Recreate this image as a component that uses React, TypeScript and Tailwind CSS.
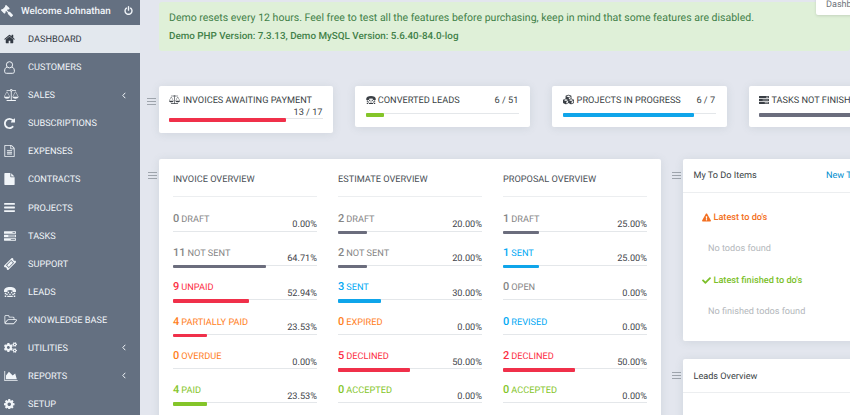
import React from "react";
import { FaCheck, FaCogs, FaCubes, FaExclamationTriangle, FaGavel } from "react-icons/fa";

const PATHS = {
  home: "M1472 992v480q0 26-19 45t-45 19h-384v-384h-256v384h-384q-26 0-45-19t-19-45v-480q0-1 .5-3t.5-3l575-474 575 474q1 2 1 6zm223-69l-62 74q-8 9-21 11h-3q-13 0-21-7l-692-577-692 577q-12 8-24 7-13-2-21-11l-62-74q-8-10-7-23.5t11-21.5l719-599q32-26 76-26t76 26l244 204v-195q0-14 9-23t23-9h192q14 0 23 9t9 23v408l219 182q10 8 11 21.5t-7 23.5z",
  repeat: "M1664 256v448q0 26-19 45t-45 19h-448q-42 0-59-40-17-39 14-69l138-138q-148-137-349-137-104 0-198.5 40.5t-163.5 109.5-109.5 163.5-40.5 198.5 40.5 198.5 109.5 163.5 163.5 109.5 198.5 40.5q119 0 225-52t179-147q7-10 23-12 15 0 25 9l137 138q9 8 9.5 20.5t-7.5 22.5q-109 132-264 204.5t-327 72.5q-156 0-298-61t-245-164-164-245-61-298 61-298 164-245 245-164 298-61q147 0 284.5 55.5t244.5 156.5l130-129q29-31 70-14 39 17 39 59z",
  tasks: "M1024 1408h640v-128h-640v128zm-384-512h1024v-128h-1024v128zm640-512h384v-128h-384v128zm512 832v256q0 26-19 45t-45 19h-1664q-26 0-45-19t-19-45v-256q0-26 19-45t45-19h1664q26 0 45 19t19 45zm0-512v256q0 26-19 45t-45 19h-1664q-26 0-45-19t-19-45v-256q0-26 19-45t45-19h1664q26 0 45 19t19 45zm0-512v256q0 26-19 45t-45 19h-1664q-26 0-45-19t-19-45v-256q0-26 19-45t45-19h1664q26 0 45 19t19 45z",
  power: "M1664 896q0 156-61 298t-164 245-245 164-298 61-298-61-245-164-164-245-61-298q0-182 80.5-343t226.5-270q43-32 95.5-25t83.5 50q32 42 24.5 94.5t-49.5 84.5q-98 74-151.5 181t-53.5 228q0 104 40.5 198.5t109.5 163.5 163.5 109.5 198.5 40.5 198.5-40.5 163.5-109.5 109.5-163.5 40.5-198.5q0-121-53.5-228t-151.5-181q-42-32-49.5-84.5t24.5-94.5q31-43 84-50t95 25q146 109 226.5 270t80.5 343zm-640-768v640q0 52-38 90t-90 38-90-38-38-90v-640q0-52 38-90t90-38 90 38 38 90z",
  folder: "M1845 931q0-35-53-35h-1088q-40 0-85.5 21.5t-71.5 52.5l-294 363q-18 24-18 40 0 35 53 35h1088q40 0 86-22t71-53l294-363q18-22 18-39zm-1141-163h768v-160q0-40-28-68t-68-28h-576q-40 0-68-28t-28-68v-64q0-40-28-68t-68-28h-320q-40 0-68 28t-28 68v853l256-315q44-53 116-87.5t140-34.5zm1269 163q0 62-46 120l-295 363q-43 53-116 87.5t-140 34.5h-1088q-92 0-158-66t-66-158v-960q0-92 66-158t158-66h320q92 0 158 66t66 158v32h544q92 0 158 66t66 158v160h192q54 0 99 24.5t67 70.5q15 32 15 68z",
  fileText: "M1596 380q28 28 48 76t20 88v1152q0 40-28 68t-68 28h-1344q-40 0-68-28t-28-68v-1600q0-40 28-68t68-28h896q40 0 88 20t76 48zm-444-244v376h376q-10-29-22-41l-313-313q-12-12-41-22zm384 1528v-1024h-416q-40 0-68-28t-28-68v-416h-768v1536h1280zm-1024-864q0-14 9-23t23-9h704q14 0 23 9t9 23v64q0 14-9 23t-23 9h-704q-14 0-23-9t-9-23v-64zm736 224q14 0 23 9t9 23v64q0 14-9 23t-23 9h-704q-14 0-23-9t-9-23v-64q0-14 9-23t23-9h704zm0 256q14 0 23 9t9 23v64q0 14-9 23t-23 9h-704q-14 0-23-9t-9-23v-64q0-14 9-23t23-9h704z",
  file: "M1152 512v-472q22 14 36 28l408 408q14 14 28 36h-472zm-128 32q0 40 28 68t68 28h544v1056q0 40-28 68t-68 28h-1344q-40 0-68-28t-28-68v-1600q0-40 28-68t68-28h800v544z",
  bars: "M1664 1344v128q0 26-19 45t-45 19h-1408q-26 0-45-19t-19-45v-128q0-26 19-45t45-19h1408q26 0 45 19t19 45zm0-512v128q0 26-19 45t-45 19h-1408q-26 0-45-19t-19-45v-128q0-26 19-45t45-19h1408q26 0 45 19t19 45zm0-512v128q0 26-19 45t-45 19h-1408q-26 0-45-19t-19-45v-128q0-26 19-45t45-19h1408q26 0 45 19t19 45z",
  area: "M2048 1536v128h-2048v-1536h128v1408h1920zm-384-1024l256 896h-1664v-576l448-576 576 576z",
  cog: "M1152 896q0-106-75-181t-181-75-181 75-75 181 75 181 181 75 181-75 75-181zm512-109v222q0 12-8 23t-20 13l-185 28q-19 54-39 91 35 50 107 138 10 12 10 25t-9 23q-27 37-99 108t-94 71q-12 0-26-9l-138-108q-44 23-91 38-16 136-29 186-7 28-36 28h-222q-14 0-24.5-8.5t-11.5-21.5l-28-184q-49-16-90-37l-141 107q-10 9-25 9-14 0-25-11-126-114-165-168-7-10-7-23 0-12 8-23 15-21 51-66.5t54-70.5q-27-50-41-99l-183-27q-13-2-21-12.5t-8-23.5v-222q0-12 8-23t19-13l186-28q14-46 39-92-40-57-107-138-10-12-10-24 0-10 9-23 26-36 98.5-107.5t94.5-71.5q13 0 26 10l138 107q44-23 91-38 16-136 29-186 7-28 36-28h222q14 0 24.5 8.5t11.5 21.5l28 184q49 16 90 37l142-107q9-9 24-9 13 0 25 10 129 119 165 170 7 8 7 22 0 12-8 23-15 21-51 66.5t-54 70.5q26 50 41 98l183 28q13 2 21 12.5t8 23.5z",
  scale: "M1728 448l-384 704h768zm-1280 0l-384 704h768zm821-192q-14 40-45.5 71.5t-71.5 45.5v1291h608q14 0 23 9t9 23v64q0 14-9 23t-23 9h-1344q-14 0-23-9t-9-23v-64q0-14 9-23t23-9h608v-1291q-40-14-71.5-45.5t-45.5-71.5h-491q-14 0-23-9t-9-23v-64q0-14 9-23t23-9h491q21-57 70-92.5t111-35.5 111 35.5 70 92.5h491q14 0 23 9t9 23v64q0 14-9 23t-23 9h-491zm-181 16q33 0 56.5-23.500t23.500-56.500-23.500-56.500-56.500-23.500-56.500 23.500-23.500 56.500 23.500 56.500 56.500 23.500zm1088 880q0 73-46.500 131t-117.500 91-144.500 49.500-139.500 16.500-139.500-16.500-144.500-49.500-117.500-91-46.500-131q0-11 35-81t92-174.500 107-195.500 102-184 56-100q18-33 56-33t56 33q4 7 56 100t102 184 107 195.500 92 174.500 35 81zm-1280 0q0 73-46.500 131t-117.500 91-144.500 49.500-139.500 16.500-139.500-16.500-144.500-49.500-117.500-91-46.500-131q0-11 35-81t92-174.500 107-195.500 102-184 56-100q18-33 56-33t56 33q4 7 56 100t102 184 107 195.500 92 174.500 35 81z",
};

function Glyph({ name, box = "0 0 1792 1792", className }: { name: keyof typeof PATHS; box?: string; className: string }) {
  return (
    <svg viewBox={box} fill="currentColor" className={className}>
      <path d={PATHS[name]} />
    </svg>
  );
}

function UserOutline() {
  return (
    <svg viewBox="0 0 11 13" fill="none" stroke="currentColor" strokeWidth="1" className="h-[13px] w-[11px]">
      <circle cx="5.5" cy="3.8" r="3.1" />
      <path d="M3 6C1.2 6.6.6 8.4.6 10.3.6 11.6 1.3 12.3 2.4 12.3H8.6C9.7 12.3 10.4 11.6 10.4 10.3 10.4 8.4 9.8 6.6 8 6" />
    </svg>
  );
}

function Tty({ className }: { className: string }) {
  return (
    <svg viewBox="0 0 24 20" fill="currentColor" className={className}>
      <path d="M0 7.500C0 2.800 5 0 12 0s12 2.800 12 7.500V9q0 1-1 1h-5q-1 0-1-1V6.800Q14.500 6 12 6T7 6.800V9q0 1-1 1H1Q0 10 0 9z" />
      <path d="M1.500 11.500h3v3h-3zM7.500 9.500h2.600v3H7.500zM13.900 9.500h2.600v3h-2.600zM19.500 11.500h3v3h-3zM4.600 13.500h2.800v2.600H4.600zM10.600 13.500h2.800v2.600h-2.800zM16.600 13.500h2.800v2.600h-2.800zM1.500 17h3v3h-3zM6.500 17.300h11V20h-11zM19.500 17h3v3h-3z" />
    </svg>
  );
}

function Ticket() {
  return (
    <svg viewBox="0 0 24 24" fill="currentColor" className="h-[12px] w-[12px]">
      <g transform="rotate(-45 12 12)">
        <path fillRule="evenodd" d="M0 6h24v3.800a2.400 2.400 0 0 0 0 4.600V18H0v-3.600a2.400 2.400 0 0 0 0-4.600zM4.600 8v8h14.800V8z" />
        <path d="M6.200 9.500h11.600v5H6.200z" />
      </g>
    </svg>
  );
}

function Arrow() {
  return (
    <svg viewBox="0 0 4 7" fill="none" stroke="currentColor" strokeWidth="1" className="ml-auto h-[7px] w-[4px]">
      <path d="M3.3.8L.8 3.5 3.3 6.2" />
    </svg>
  );
}

type MenuItem = { label: string; icon: React.ReactNode; active?: boolean; arrow?: boolean };

const menu: MenuItem[] = [
  { label: "DASHBOARD", icon: <Glyph name="home" box="50 128 1692 1536" className="h-[10px] w-[11px]" />, active: true },
  { label: "CUSTOMERS", icon: <UserOutline /> },
  { label: "SALES", icon: <Glyph name="scale" box="0 0 2176 1792" className="h-[12px] w-[14.500px]" />, arrow: true },
  { label: "SUBSCRIPTIONS", icon: <Glyph name="repeat" box="128 128 1536 1536" className="h-[11px] w-[11px]" /> },
  { label: "EXPENSES", icon: <Glyph name="fileText" box="128 0 1536 1792" className="h-[12px] w-[11px]" /> },
  { label: "CONTRACTS", icon: <Glyph name="file" box="128 0 1536 1792" className="h-[12px] w-[11px]" /> },
  { label: "PROJECTS", icon: <Glyph name="bars" box="128 256 1536 1280" className="h-[9px] w-[11px]" /> },
  { label: "TASKS", icon: <Glyph name="tasks" box="0 128 1792 1408" className="h-[10px] w-[12px]" /> },
  { label: "SUPPORT", icon: <Ticket /> },
  { label: "LEADS", icon: <Tty className="h-[10px] w-[12px]" /> },
  { label: "KNOWLEDGE BASE", icon: <Glyph name="folder" box="0 128 1984 1536" className="h-[10px] w-[13px]" /> },
  { label: "UTILITIES", icon: <FaCogs className="h-[13px] w-[13px]" />, arrow: true },
  { label: "REPORTS", icon: <Glyph name="area" box="0 128 2048 1536" className="h-[10px] w-[14px]" />, arrow: true },
  { label: "SETUP", icon: <Glyph name="cog" box="128 128 1536 1536" className="h-[10.500px] w-[10.500px]" /> },
];

function Sidebar() {
  return (
    <aside className="h-[415px] w-[140px] shrink-0 overflow-hidden bg-[#647081] text-[#f1f5f9]">
      <div className="flex h-[25px] items-center pb-[4px] pl-[1px] pr-[7px]">
        <FaGavel className="h-[12px] w-[12px] -scale-x-100" />
        <span className="ml-[8px] whitespace-nowrap pt-[4px] text-[9.800px] font-medium">Welcome Johnathan</span>
        <Glyph name="power" box="128 0 1536 1664" className="ml-auto h-[9px] w-[9px]" />
      </div>
      <nav>
        {menu.map((m) => (
          <div
            key={m.label}
            className={`flex h-[28.080px] items-center pl-[4px] pr-[14px] ${m.active ? "bg-[#e3e8ee] text-[#333a44]" : ""}`}
          >
            <span className="flex w-[24px] items-center">{m.icon}</span>
            <span className="whitespace-nowrap pt-[2px] text-[9.200px] leading-[14px]">{m.label}</span>
            {m.arrow && <Arrow />}
          </div>
        ))}
      </nav>
    </aside>
  );
}

function Handle({ className }: { className: string }) {
  return (
    <div className={`flex shrink-0 flex-col gap-[2px] ${className}`}>
      <i className="h-px w-[9px] bg-[#9fa5ad]" />
      <i className="h-px w-[9px] bg-[#9fa5ad]" />
      <i className="h-px w-[9px] bg-[#9fa5ad]" />
    </div>
  );
}

function Bar({ pct, color }: { pct: number; color: string }) {
  return (
    <div className="h-[4px]">
      <div className="h-px bg-[#e4e7ea]">
        <div className={`h-[3.500px] rounded-[1px] ${color}`} style={{ width: `${pct}%` }} />
      </div>
    </div>
  );
}

type StatProps = { icon: React.ReactNode; title: string; value: string; pct: number; color: string; wide?: boolean; wrap?: boolean };

function Stat({ icon, title, value, pct, color, wide, wrap }: StatProps) {
  return (
    <div className={`w-[174.500px] shrink-0 rounded-[2px] bg-white px-[10.500px] pt-[8px] shadow-[0_1px_8px_rgba(90,114,123,0.14)] ${wrap ? "h-[47px]" : "h-[41px]"}`}>
      <div className={`flex flex-wrap items-center text-[9.200px] leading-[13px] text-[#3a3f45] ${wrap ? "h-[24px]" : "h-[19px] content-start"}`}>
        <span className={`flex items-center pb-[2px] ${wide || wrap ? "w-[14px]" : "w-[12px]"}`}>{icon}</span>
        <span className="whitespace-nowrap">{title}</span>
        <span className={wrap ? "w-full text-right leading-[12px]" : "ml-auto pr-[1px]"}>{value}</span>
      </div>
      <Bar pct={pct} color={color} />
    </div>
  );
}

const GRAY = "text-[#858585]";
const BLUE = "text-[#03a9f4]";
const ORANGE = "text-[#ff7e1c]";
const RED = "text-[#fc2d42]";
const GREEN = "text-[#84c529]";
const DARK_BAR = "bg-[#6b6d7d]";
const BLUE_BAR = "bg-[#0fa5ea]";
const RED_BAR = "bg-[#f0304a]";
const GREEN_BAR = "bg-[#84c529]";

type Row = [number, string, string, number, string];

const overview: { title: string; rows: Row[] }[] = [
  {
    title: "INVOICE OVERVIEW",
    rows: [
      [0, "DRAFT", GRAY, 0, DARK_BAR],
      [11, "NOT SENT", GRAY, 64.71, DARK_BAR],
      [9, "UNPAID", RED, 52.94, RED_BAR],
      [4, "PARTIALLY PAID", ORANGE, 23.53, RED_BAR],
      [0, "OVERDUE", ORANGE, 0, RED_BAR],
      [4, "PAID", GREEN, 23.53, GREEN_BAR],
    ],
  },
  {
    title: "ESTIMATE OVERVIEW",
    rows: [
      [2, "DRAFT", GRAY, 20, DARK_BAR],
      [2, "NOT SENT", GRAY, 20, DARK_BAR],
      [3, "SENT", BLUE, 30, BLUE_BAR],
      [0, "EXPIRED", ORANGE, 0, RED_BAR],
      [5, "DECLINED", RED, 50, RED_BAR],
      [0, "ACCEPTED", GREEN, 0, GREEN_BAR],
    ],
  },
  {
    title: "PROPOSAL OVERVIEW",
    rows: [
      [1, "DRAFT", GRAY, 25, DARK_BAR],
      [1, "SENT", BLUE, 25, BLUE_BAR],
      [0, "OPEN", GRAY, 0, DARK_BAR],
      [0, "REVISED", BLUE, 0, BLUE_BAR],
      [2, "DECLINED", RED, 50, RED_BAR],
      [0, "ACCEPTED", GREEN, 0, GREEN_BAR],
    ],
  },
];

function Overview() {
  return (
    <section className="flex h-[270px] w-[502px] shrink-0 gap-[21px] rounded-[2px] bg-white pl-[14.500px] shadow-[0_1px_8px_rgba(90,114,123,0.14)]">
      {overview.map((col) => (
        <div key={col.title} className="w-[144px] shrink-0">
          <div className="h-[38px] whitespace-nowrap border-b border-[#eceef0] pt-[14.400px] text-[9.200px] leading-[13px] text-[#4a4f56]">
            {col.title}
          </div>
          <div className="pt-[13px]">
            {col.rows.map(([n, label, color, pct, bar]) => (
              <div key={label} className="h-[34.400px]">
                <div className="flex h-[21px] items-start justify-between">
                  <span className={`flex items-baseline gap-[2px] leading-[17px] ${color}`}>
                    <b className="text-[11px] font-medium">{n}</b>
                    <span className="text-[9.200px]">{label}</span>
                  </span>
                  <span className="pt-[8.500px] text-[9.200px] leading-[13px] text-[#3f444a]">{pct.toFixed(2)}%</span>
                </div>
                <Bar pct={pct} color={bar} />
              </div>
            ))}
          </div>
        </div>
      ))}
    </section>
  );
}

function SideColumn() {
  return (
    <div className="flex w-[189px] shrink-0 flex-col gap-[18px]">
      <div className="flex">
        <Handle className="w-[11px] pt-[13px]" />
        <section className="h-[182.500px] w-[178px] shrink-0 rounded-[2px] bg-white text-[9.150px] leading-[13px] shadow-[0_1px_8px_rgba(90,114,123,0.14)]">
          <div className="flex h-[34px] justify-between whitespace-nowrap border-b border-[#eceef0] pl-[10.500px] pt-[11px]">
            <span className="text-[#3a3f45]">My To Do Items</span>
            <span className="w-[35px] text-[#008ece]">New To Do</span>
          </div>
          <div className="flex items-center gap-[2.500px] pl-[19px] pt-[19px] font-medium text-[#f37022]">
            <FaExclamationTriangle className="mb-[2px] h-[9px] w-[9px]" />
            Latest to do's
          </div>
          <p className="pl-[25px] pt-[18px] text-[#b4b8bc]">No todos found</p>
          <div className="flex items-center gap-[2.500px] pl-[19px] pt-[19px] font-medium text-[#7cbf2a]">
            <FaCheck className="mb-[2px] h-[9px] w-[9px]" />
            Latest finished to do's
          </div>
          <p className="pl-[25px] pt-[18px] text-[#b4b8bc]">No finished todos found</p>
        </section>
      </div>
      <div className="flex">
        <Handle className="w-[11px] pt-[13px]" />
        <section className="h-[80px] w-[178px] shrink-0 rounded-[2px] bg-white text-[9.150px] leading-[13px] text-[#3a3f45] shadow-[0_1px_8px_rgba(90,114,123,0.14)]">
          <div className="h-[34px] border-b border-[#eceef0] pl-[10.500px] pt-[12px]">Leads Overview</div>
        </section>
      </div>
    </div>
  );
}

export default function App() {
  return (
    <div className="relative flex h-[415px] w-[850px] overflow-hidden bg-[#e3e6ee] font-['Roboto',sans-serif] [text-rendering:geometricPrecision]">
      <Sidebar />
      <main className="w-[710px] shrink-0 overflow-hidden">
        <div className="ml-[18.500px] mt-[2px] h-[48.500px] rounded-[3px] bg-[#dff0d8] pl-[10.500px] pt-[7px] text-[#3f8048]">
          <p className="whitespace-nowrap text-[10.530px] leading-[17px]">
            Demo resets every 12 hours. Feel free to test all the features before purchasing, keep in mind that some features are disabled.
          </p>
          <p className="pt-[3px] text-[9.830px] font-medium leading-[16px]">
            Demo PHP Version: 7.3.13, Demo MySQL Version: 5.6.40-84.0-log
          </p>
        </div>
        <div className="mt-[35.500px] flex h-[72.500px] items-start">
          <Handle className="w-[18.500px] pl-[7px] pt-[12px]" />
          <div className="flex items-start gap-[22.300px]">
            <Stat icon={<Glyph name="scale" box="0 0 2176 1792" className="h-[9px] w-[11px]" />} title="INVOICES AWAITING PAYMENT" value="13 / 17" pct={76.47} color={RED_BAR} wrap />
            <Stat icon={<Tty className="h-[8px] w-[10px]" />} title="CONVERTED LEADS" value="6 / 51" pct={11.76} color={GREEN_BAR} />
            <Stat icon={<FaCubes className="h-[11px] w-[11px]" />} title="PROJECTS IN PROGRESS" value="6 / 7" pct={85.71} color={BLUE_BAR} wide />
            <Stat icon={<Glyph name="tasks" box="0 128 1792 1408" className="h-[8px] w-[10px]" />} title="TASKS NOT FINISHED" value="9 / 9" pct={100} color={DARK_BAR} />
          </div>
        </div>
        <div className="flex items-start">
          <Handle className="w-[18.500px] pl-[7.500px] pt-[13px]" />
          <Overview />
          <div className="ml-[11.500px]">
            <SideColumn />
          </div>
        </div>
      </main>
      <div className="absolute left-[815.500px] top-[-6px] h-[21px] w-[60px] rounded-[2px] bg-white pl-[10.500px] pt-[5px] text-[9.100px] leading-[13px] text-[#6f757c] shadow-[0_1px_3px_rgba(0,0,0,0.12)]">
        Dashboard
      </div>
    </div>
  );
}
